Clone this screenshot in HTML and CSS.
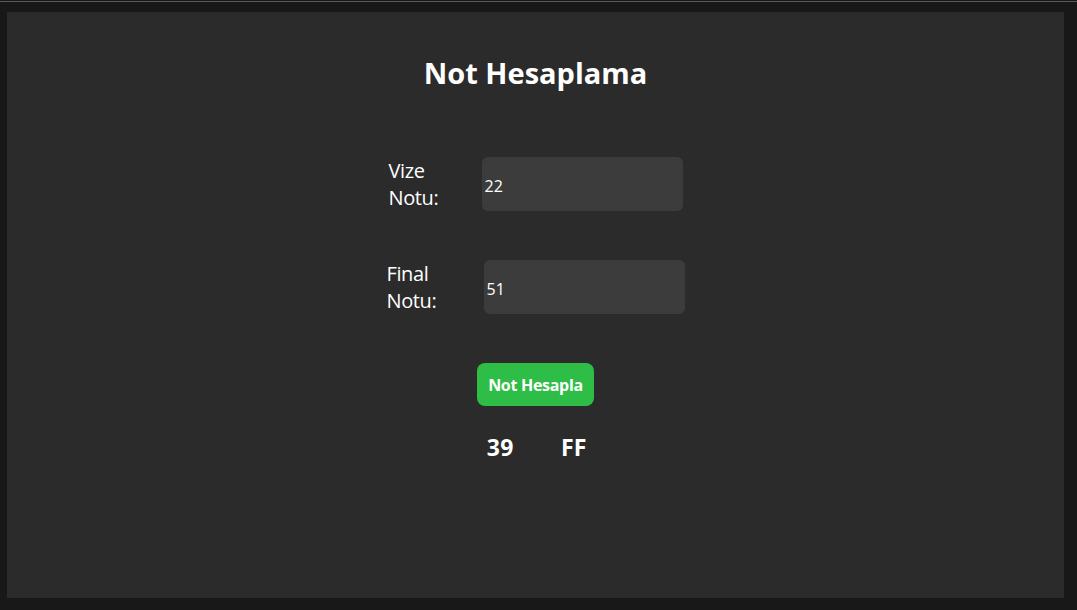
FILE: index.html
```html
<!DOCTYPE html>
<html lang="tr">
<head>
<meta charset="utf-8">
<title>Not Hesaplama</title>
<link rel="stylesheet" href="styles.css">
</head>
<body>
<main class="card">
  <h1 class="title">Not Hesaplama</h1>
  <div class="row">
    <label class="label" for="vize">Vize Notu:</label>
    <input class="field" id="vize" type="text" value="22">
  </div>
  <div class="row row-final">
    <label class="label" for="final">Final Notu:</label>
    <input class="field" id="final" type="text" value="51">
  </div>
  <button class="btn" type="button">Not Hesapla</button>
  <div class="result">
    <span class="score">39</span>
    <span class="grade">FF</span>
  </div>
</main>
</body>
</html>
```
FILE: styles.css
```css
html {
  background: linear-gradient(#181818 0 1px, #5a5a5a 1px 2px, #181818 2px);
  height: 100%;
}
body {
  margin: 0;
  height: 100%;
  font-family: "Open Sans", "Noto Sans", sans-serif;
  color: #ffffff;
}
.card {
  margin: 12px 13px 0 7px;
  height: 586px;
  background: #2b2b2b;
  display: flex;
  flex-direction: column;
  align-items: center;
  box-sizing: border-box;
  padding-top: 43px;
}
.title {
  margin: 0;
  font-size: 29px;
  line-height: 36px;
  font-weight: 700;
  letter-spacing: 0;
}
.row {
  display: flex;
  align-items: center;
  margin-top: 66px;
  gap: 31px;
}
.row-final {
  margin-top: 49px;
  gap: 35px;
}
.label {
  width: 62px;
  font-size: 20px;
  line-height: 27px;
  letter-spacing: -0.4px;
}
.field {
  width: 201px;
  height: 54px;
  box-sizing: border-box;
  border: none;
  border-radius: 6px;
  background: #3c3c3c;
  color: #ffffff;
  font-family: inherit;
  font-size: 16px;
  padding: 3px 3px 0;
  outline: none;
}
.btn {
  margin-top: 49px;
  width: 117px;
  height: 43px;
  border: none;
  border-radius: 8px;
  background: #2ebd47;
  color: #ffffff;
  font-family: inherit;
  font-size: 16px;
  font-weight: 700;
  letter-spacing: -0.3px;
  padding: 0;
}
.result {
  margin-top: 26px;
  display: flex;
  gap: 47px;
  font-size: 23px;
  line-height: 30px;
  font-weight: 700;
}
.score {
  letter-spacing: 0.5px;
  margin-left: 2px;
}
```
